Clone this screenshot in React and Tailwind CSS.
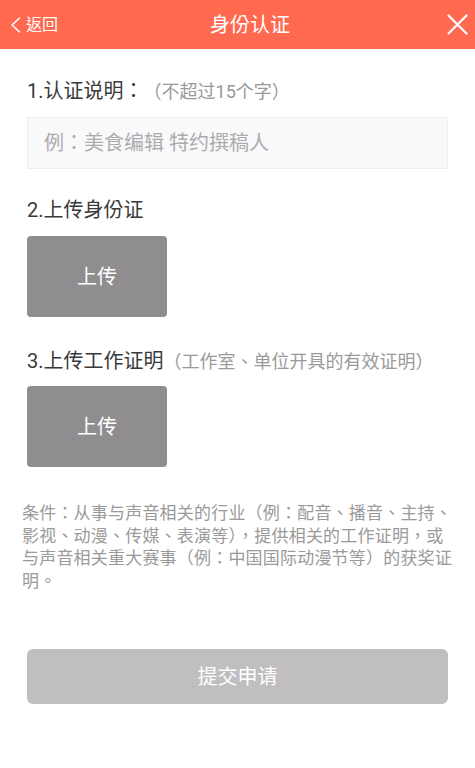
import React from 'react';

const font = { fontFamily: 'Roboto, "Noto Sans CJK TC", "Noto Sans CJK SC", sans-serif' };

const UploadBox = () => (
  <button className="w-[140px] h-[81px] rounded-[4px] bg-[#8f8d90] text-white text-[20px] flex items-center justify-center">
    上传
  </button>
);

const App = () => {
  return (
    <div className="w-[475px] min-h-[768px] bg-white" style={font}>
      {/* 顶部栏 */}
      <div className="h-[49px] bg-[#ff6950] flex items-center text-white">
        <div className="w-[80px] flex items-center pl-[10px]">
          <svg width="11" height="16" viewBox="0 0 11 16" fill="none" stroke="currentColor" strokeWidth="1.6" strokeLinecap="round" strokeLinejoin="round">
            <path d="M9.5 1 L2 8 L9.5 15" />
          </svg>
          <span className="ml-[5px] text-[16px] leading-none">返回</span>
        </div>
        <div className="flex-1 text-center text-[20px] leading-none">身份认证</div>
        <div className="w-[55px] flex items-center justify-end pr-[7px]">
          <svg width="21" height="21" viewBox="0 0 21 21" fill="none" stroke="currentColor" strokeWidth="2.2" strokeLinecap="round">
            <path d="M1.5 1.5 L19.5 19.5 M19.5 1.5 L1.5 19.5" />
          </svg>
        </div>
      </div>

      <div className="px-[27px]">
        <div className="mt-[28px] h-[28px] flex items-center text-[20px] text-[#3a3a3a]">
          1.认证说明：<span className="text-[18px] text-[#9a9a9a]">（不超过15个字）</span>
        </div>
        <div className="mt-[12px] h-[52px] bg-[#f9f8fa] border border-[#efeef1] flex items-center pl-[16px] text-[20px] text-[#acacac]">
          例：美食编辑 特约撰稿人
        </div>

        <div className="mt-[27px] h-[28px] flex items-center text-[20px] text-[#3a3a3a]">2.上传身份证</div>
        <div className="mt-[12px]">
          <UploadBox />
        </div>

        <div className="mt-[30px] h-[28px] flex items-center text-[20px] text-[#3a3a3a]">
          3.上传工作证明<span className="text-[18px] text-[#9a9a9a]">（工作室、单位开具的有效证明）</span>
        </div>
        <div className="mt-[11px]">
          <UploadBox />
        </div>
      </div>

      <p className="mt-[35px] ml-[22px] w-[432px] text-[17px] leading-[22.5px] tracking-[0.2px] text-[#9a9a9a]">
        条件：从事与声音相关的行业（例：配音、播音、主持、影视、动漫、传媒、表演等），提供相关的工作证明，或与声音相关重大赛事（例：中国国际动漫节等）的获奖证明。
      </p>

      <div className="px-[27px] mt-[57px]">
        <button className="w-full h-[55px] rounded-[6px] bg-[#c0bec1] text-white text-[20px]">提交申请</button>
      </div>
    </div>
  );
};

export default App;
